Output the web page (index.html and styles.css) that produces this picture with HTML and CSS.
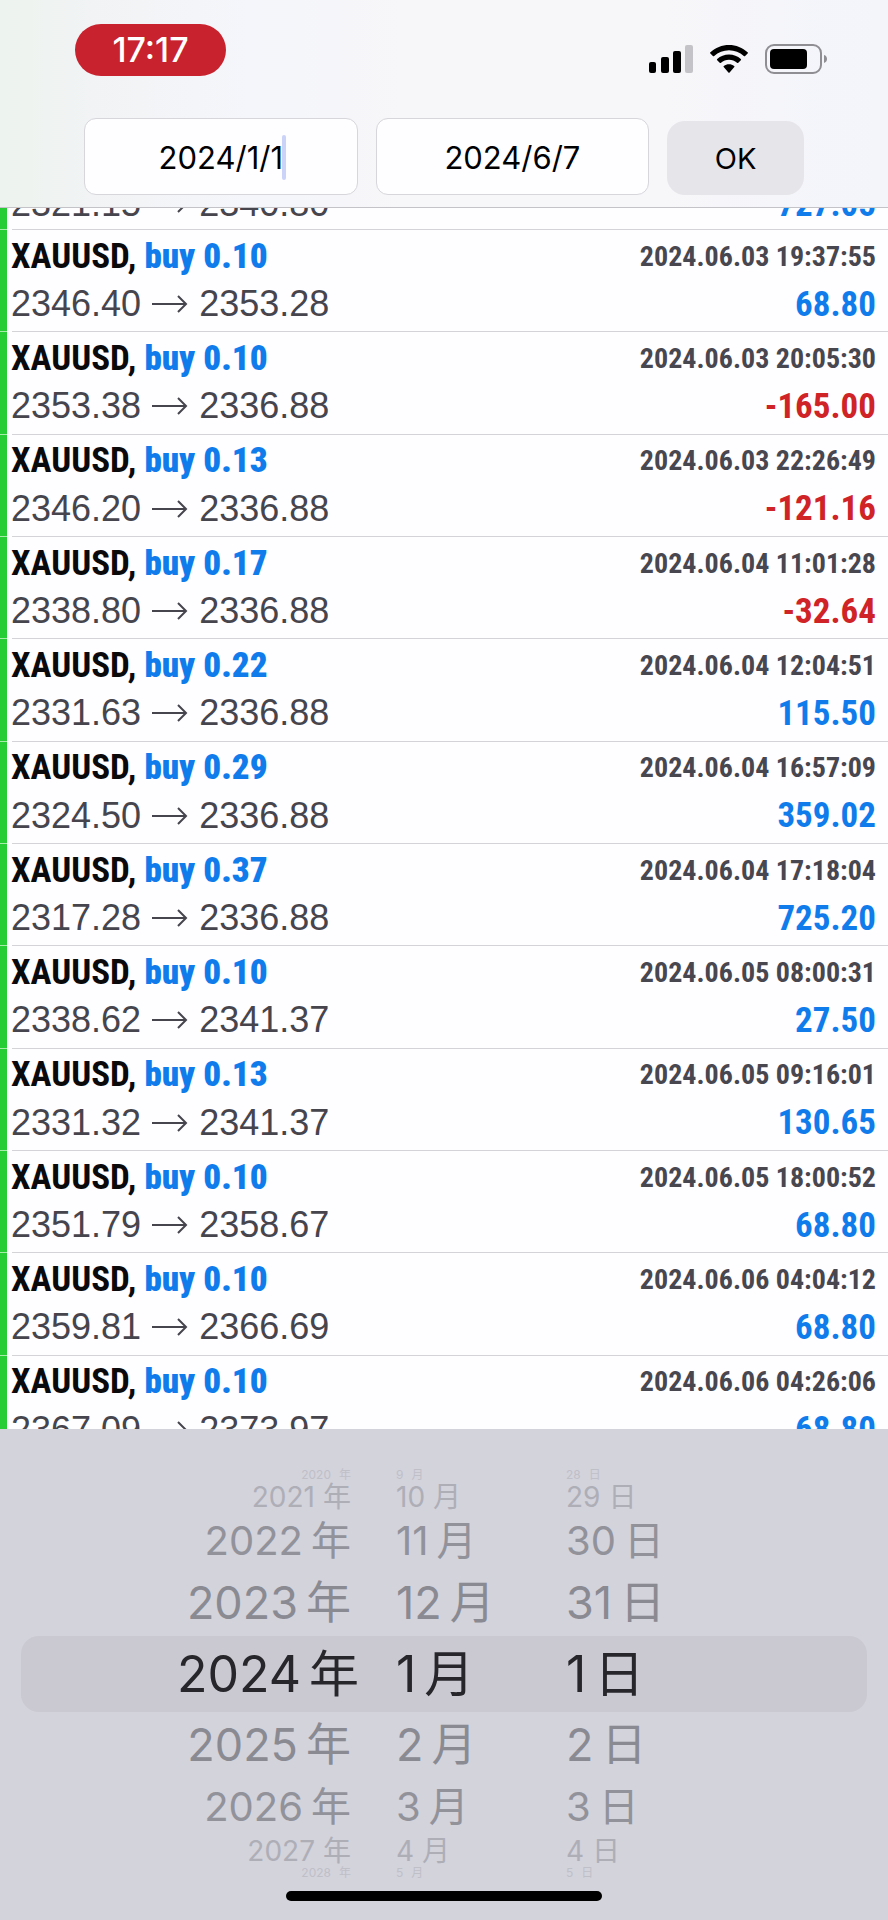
FILE: index.html
```html
<!DOCTYPE html>
<html lang="ja">
<head>
<meta charset="utf-8">
<meta name="viewport" content="width=device-width, initial-scale=1">
<title>History</title>
<link rel="stylesheet" href="styles.css">
</head>
<body>
<div class="screen">
  <header class="top">
    <div class="status">
      <span class="clock">17:17</span>
      <div class="status-icons">
        <svg width="44" height="28" viewBox="0 0 44 28" aria-label="Signal">
          <rect x="0" y="17" width="7" height="11" rx="2"/>
          <rect x="12" y="12" width="8" height="16" rx="2"/>
          <rect x="24" y="6" width="8" height="22" rx="2"/>
          <rect x="36" y="0" width="8" height="28" rx="2" fill="#c4c3c7"/>
        </svg>
        <svg width="38" height="28" viewBox="0 0 38 28" aria-label="Wi-Fi">
          <path d="M19 0C12 0 5.300 2.700.4 7.300a.9.9 0 0 0 0 1.300L2.900 11a.9.9 0 0 0 1.300 0C8.200 7.400 13.500 5.300 19 5.300S29.800 7.400 33.800 11a.9.9 0 0 0 1.300 0l2.500-2.400a.9.9 0 0 0 0-1.300C32.700 2.700 26 0 19 0z"/>
          <path d="M19 9.400c-4.500 0-8.600 1.700-11.800 4.500a1 1 0 0 0 0 1.400l2.500 2.500a1 1 0 0 0 1.300 0c2.200-1.900 5-3.100 8-3.100s5.800 1.200 8 3.100a1 1 0 0 0 1.300 0l2.500-2.500a1 1 0 0 0 0-1.400C27.600 11.100 23.500 9.400 19 9.400z"/>
          <path d="M19 19.200c-2 0-3.700.6-5.100 1.700a.9.9 0 0 0 0 1.400l4.500 5.200a.9.9 0 0 0 1.200 0l4.500-5.200a.9.900 0 0 0 0-1.400c-1.400-1.100-3.100-1.700-5.100-1.700z"/>
        </svg>
        <svg width="63" height="30" viewBox="0 0 63 30" aria-label="Battery">
          <rect x="1" y="1" width="55" height="28" rx="8" fill="none" stroke="#8f8e93" stroke-width="2"/>
          <rect x="5" y="5" width="37" height="20" rx="4"/>
          <path d="M59 11c2 .6 3 2.200 3 4s-1 3.400-3 4z" fill="#8f8e93"/>
        </svg>
      </div>
    </div>
    <form class="range">
      <div class="field">
        <input class="date" type="text" value="2024/1/1" aria-label="From">
        <span class="caret"></span>
      </div>
      <div class="field">
        <input class="date" type="text" value="2024/6/7" aria-label="To">
      </div>
      <button class="ok" type="button">OK</button>
    </form>
  </header>

  <main class="history">
    <ul class="deals">
      <li class="deal scrolled"><span class="prices">2321.15 <svg class="arrow" viewBox="0 0 36 18"><path d="M0 9h34M26 1l8 8-8 8"/></svg> 2340.80</span><span class="profit">727.05</span></li>
      <li class="deal"><span class="symbol">XAUUSD, <b class="side">buy 0.10</b></span><time class="time">2024.06.03 19:37:55</time><span class="prices">2346.40 <svg class="arrow" viewBox="0 0 36 18"><path d="M0 9h34M26 1l8 8-8 8"/></svg> 2353.28</span><span class="profit">68.80</span></li>
      <li class="deal"><span class="symbol">XAUUSD, <b class="side">buy 0.10</b></span><time class="time">2024.06.03 20:05:30</time><span class="prices">2353.38 <svg class="arrow" viewBox="0 0 36 18"><path d="M0 9h34M26 1l8 8-8 8"/></svg> 2336.88</span><span class="profit loss">-165.00</span></li>
      <li class="deal"><span class="symbol">XAUUSD, <b class="side">buy 0.13</b></span><time class="time">2024.06.03 22:26:49</time><span class="prices">2346.20 <svg class="arrow" viewBox="0 0 36 18"><path d="M0 9h34M26 1l8 8-8 8"/></svg> 2336.88</span><span class="profit loss">-121.16</span></li>
      <li class="deal"><span class="symbol">XAUUSD, <b class="side">buy 0.17</b></span><time class="time">2024.06.04 11:01:28</time><span class="prices">2338.80 <svg class="arrow" viewBox="0 0 36 18"><path d="M0 9h34M26 1l8 8-8 8"/></svg> 2336.88</span><span class="profit loss">-32.64</span></li>
      <li class="deal"><span class="symbol">XAUUSD, <b class="side">buy 0.22</b></span><time class="time">2024.06.04 12:04:51</time><span class="prices">2331.63 <svg class="arrow" viewBox="0 0 36 18"><path d="M0 9h34M26 1l8 8-8 8"/></svg> 2336.88</span><span class="profit">115.50</span></li>
      <li class="deal"><span class="symbol">XAUUSD, <b class="side">buy 0.29</b></span><time class="time">2024.06.04 16:57:09</time><span class="prices">2324.50 <svg class="arrow" viewBox="0 0 36 18"><path d="M0 9h34M26 1l8 8-8 8"/></svg> 2336.88</span><span class="profit">359.02</span></li>
      <li class="deal"><span class="symbol">XAUUSD, <b class="side">buy 0.37</b></span><time class="time">2024.06.04 17:18:04</time><span class="prices">2317.28 <svg class="arrow" viewBox="0 0 36 18"><path d="M0 9h34M26 1l8 8-8 8"/></svg> 2336.88</span><span class="profit">725.20</span></li>
      <li class="deal"><span class="symbol">XAUUSD, <b class="side">buy 0.10</b></span><time class="time">2024.06.05 08:00:31</time><span class="prices">2338.62 <svg class="arrow" viewBox="0 0 36 18"><path d="M0 9h34M26 1l8 8-8 8"/></svg> 2341.37</span><span class="profit">27.50</span></li>
      <li class="deal"><span class="symbol">XAUUSD, <b class="side">buy 0.13</b></span><time class="time">2024.06.05 09:16:01</time><span class="prices">2331.32 <svg class="arrow" viewBox="0 0 36 18"><path d="M0 9h34M26 1l8 8-8 8"/></svg> 2341.37</span><span class="profit">130.65</span></li>
      <li class="deal"><span class="symbol">XAUUSD, <b class="side">buy 0.10</b></span><time class="time">2024.06.05 18:00:52</time><span class="prices">2351.79 <svg class="arrow" viewBox="0 0 36 18"><path d="M0 9h34M26 1l8 8-8 8"/></svg> 2358.67</span><span class="profit">68.80</span></li>
      <li class="deal"><span class="symbol">XAUUSD, <b class="side">buy 0.10</b></span><time class="time">2024.06.06 04:04:12</time><span class="prices">2359.81 <svg class="arrow" viewBox="0 0 36 18"><path d="M0 9h34M26 1l8 8-8 8"/></svg> 2366.69</span><span class="profit">68.80</span></li>
      <li class="deal"><span class="symbol">XAUUSD, <b class="side">buy 0.10</b></span><time class="time">2024.06.06 04:26:06</time><span class="prices">2367.09 <svg class="arrow" viewBox="0 0 36 18"><path d="M0 9h34M26 1l8 8-8 8"/></svg> 2373.97</span><span class="profit">68.80</span></li>
    </ul>
  </main>

  <section class="picker" aria-label="Date picker">
    <div class="wheels">
      <ul class="wheel year" role="listbox" aria-label="年">
        <li class="item far" role="option">2020<span class="unit">年</span></li>
        <li class="item dim" role="option">2021<span class="unit">年</span></li>
        <li class="item mid" role="option">2022<span class="unit">年</span></li>
        <li class="item near" role="option">2023<span class="unit">年</span></li>
        <li class="item current" role="option" aria-selected="true">2024<span class="unit">年</span></li>
        <li class="item near" role="option">2025<span class="unit">年</span></li>
        <li class="item mid" role="option">2026<span class="unit">年</span></li>
        <li class="item dim" role="option">2027<span class="unit">年</span></li>
        <li class="item far" role="option">2028<span class="unit">年</span></li>
      </ul>
      <ul class="wheel" role="listbox" aria-label="月">
        <li class="item far" role="option">9<span class="unit">月</span></li>
        <li class="item dim" role="option">10<span class="unit">月</span></li>
        <li class="item mid" role="option">11<span class="unit">月</span></li>
        <li class="item near" role="option">12<span class="unit">月</span></li>
        <li class="item current" role="option" aria-selected="true">1<span class="unit">月</span></li>
        <li class="item near" role="option">2<span class="unit">月</span></li>
        <li class="item mid" role="option">3<span class="unit">月</span></li>
        <li class="item dim" role="option">4<span class="unit">月</span></li>
        <li class="item far" role="option">5<span class="unit">月</span></li>
      </ul>
      <ul class="wheel" role="listbox" aria-label="日">
        <li class="item far" role="option">28<span class="unit">日</span></li>
        <li class="item dim" role="option">29<span class="unit">日</span></li>
        <li class="item mid" role="option">30<span class="unit">日</span></li>
        <li class="item near" role="option">31<span class="unit">日</span></li>
        <li class="item current" role="option" aria-selected="true">1<span class="unit">日</span></li>
        <li class="item near" role="option">2<span class="unit">日</span></li>
        <li class="item mid" role="option">3<span class="unit">日</span></li>
        <li class="item dim" role="option">4<span class="unit">日</span></li>
        <li class="item far" role="option">5<span class="unit">日</span></li>
      </ul>
    </div>
    <div class="home-bar"></div>
  </section>
</div>
</body>
</html>
```
FILE: styles.css
```css
* {
  box-sizing: border-box;
}

body {
  margin: 0;
  background: #fefdff;
  font-family: Inter, "Noto Sans CJK JP", sans-serif;
}

ul {
  margin: 0;
  padding: 0;
  list-style: none;
}

.screen {
  display: flex;
  flex-direction: column;
  height: 100vh;
  overflow: hidden;
}

/* Status bar and date range */

.top {
  flex: none;
  padding: 24px 0 12px;
  background: linear-gradient(90deg, #edf3ee 0%, #f1f3f4 10%, #f4f6fb 28%, #f7f6f9 45%, #f7f6f9 75%, #f3f5fb 100%);
  border-bottom: 1px solid #c3c3c8;
}

.status {
  display: flex;
  justify-content: space-between;
  align-items: center;
  padding: 0 60px 0 75px;
}

.clock {
  width: 151px;
  border-radius: 26px;
  background: #c8222e;
  color: #fff;
  font-size: 34px;
  font-weight: 500;
  line-height: 52px;
  text-align: center;
}

.status-icons {
  display: flex;
  align-items: center;
  gap: 17px;
  padding-top: 17px;
}

.range {
  display: grid;
  grid-template-columns: 2fr 2fr 1fr;
  gap: 18px;
  align-items: end;
  margin-top: 42px;
  padding: 0 84px;
}

.field {
  position: relative;
}

.date {
  display: block;
  width: 100%;
  height: 77px;
  padding: 2px 2px 0;
  border: 1px solid #d6d6db;
  border-radius: 12px;
  background: #fefdff;
  color: #000;
  font: 400 31px Inter, sans-serif;
  text-align: center;
}

.caret {
  position: absolute;
  top: 17px;
  left: calc(50% + 61px);
  width: 4px;
  height: 45px;
  border-radius: 2px;
  background: #ccd3f8;
}

.ok {
  height: 74px;
  border: 0;
  border-radius: 18px;
  background: #e6e5e9;
  color: #000;
  font: 400 29px Inter, sans-serif;
}

/* Deals */

.history {
  flex: 1;
  min-height: 0;
  overflow: hidden;
}

.deals {
  display: grid;
  grid-template-rows: 22px;
  grid-auto-rows: 1fr;
  height: 1250px;
}

.deal {
  display: grid;
  grid-template-columns: 1fr auto;
  grid-template-rows: 48px 48px;
  align-items: center;
  padding: 2px 12px 0 11px;
  background:
    linear-gradient(#d3d3d8, #d3d3d8) 12px 100% / 100% 1px no-repeat,
    linear-gradient(#a6eda9, #a6eda9) 0 100% / 7px 1px no-repeat,
    linear-gradient(#26cd35, #26cd35) 0 0 / 7px 100% no-repeat;
}

/* The row that is partly scrolled under the header */
.scrolled {
  grid-template-rows: 48px;
  align-content: end;
  padding-top: 0;
  padding-bottom: 2px;
}

.symbol,
.profit {
  font: 700 35px "Roboto Condensed", Roboto, sans-serif;
}

.symbol {
  color: #0a0a0c;
}

.side,
.profit {
  color: #107cec;
}

.profit {
  text-align: right;
}

.loss {
  color: #cf2327;
}

.time {
  color: #48474f;
  font: 700 28px "Roboto Condensed", Roboto, sans-serif;
}

.prices {
  color: #46454d;
  font: 400 36px "Liberation Sans", Arial, sans-serif;
}

.arrow {
  width: 36px;
  height: 18px;
  margin: 0 1px;
  vertical-align: 3px;
  fill: none;
  stroke: #46454d;
  stroke-width: 2;
}

/* Date picker */

.picker {
  flex: none;
  padding: 39px 21px 19px;
  background: #d3d3dc;
}

.wheels {
  position: relative;
  display: grid;
  grid-template-columns: 343fr 170fr 333fr;
}

/* Band behind the selected row */
.wheels::before {
  content: "";
  position: absolute;
  inset: 168px 0;
  border-radius: 18px;
  background: #cac9d2;
}

.wheel {
  position: relative;
  padding-left: 32px;
}

.year {
  padding: 0 5px 0 0;
  text-align: right;
}

.item {
  white-space: nowrap;
}

.unit {
  margin-left: 8px;
}

.current {
  color: #26262b;
  font-size: 50px;
  line-height: 76px;
}

.near {
  color: #8a8a92;
  font-size: 45px;
  line-height: 66px;
}

.mid {
  color: #92929a;
  font-size: 40px;
  line-height: 58px;
}

.dim {
  color: #aeaeb7;
  font-size: 28px;
  line-height: 30px;
}

.far {
  color: #bfbfc8;
  font-size: 12px;
  line-height: 14px;
}

.year .item:not(.current) {
  padding-right: 8px;
}

.home-bar {
  width: 316px;
  height: 10px;
  margin: 11px auto 0;
  border-radius: 5px;
  background: #000;
}
```
